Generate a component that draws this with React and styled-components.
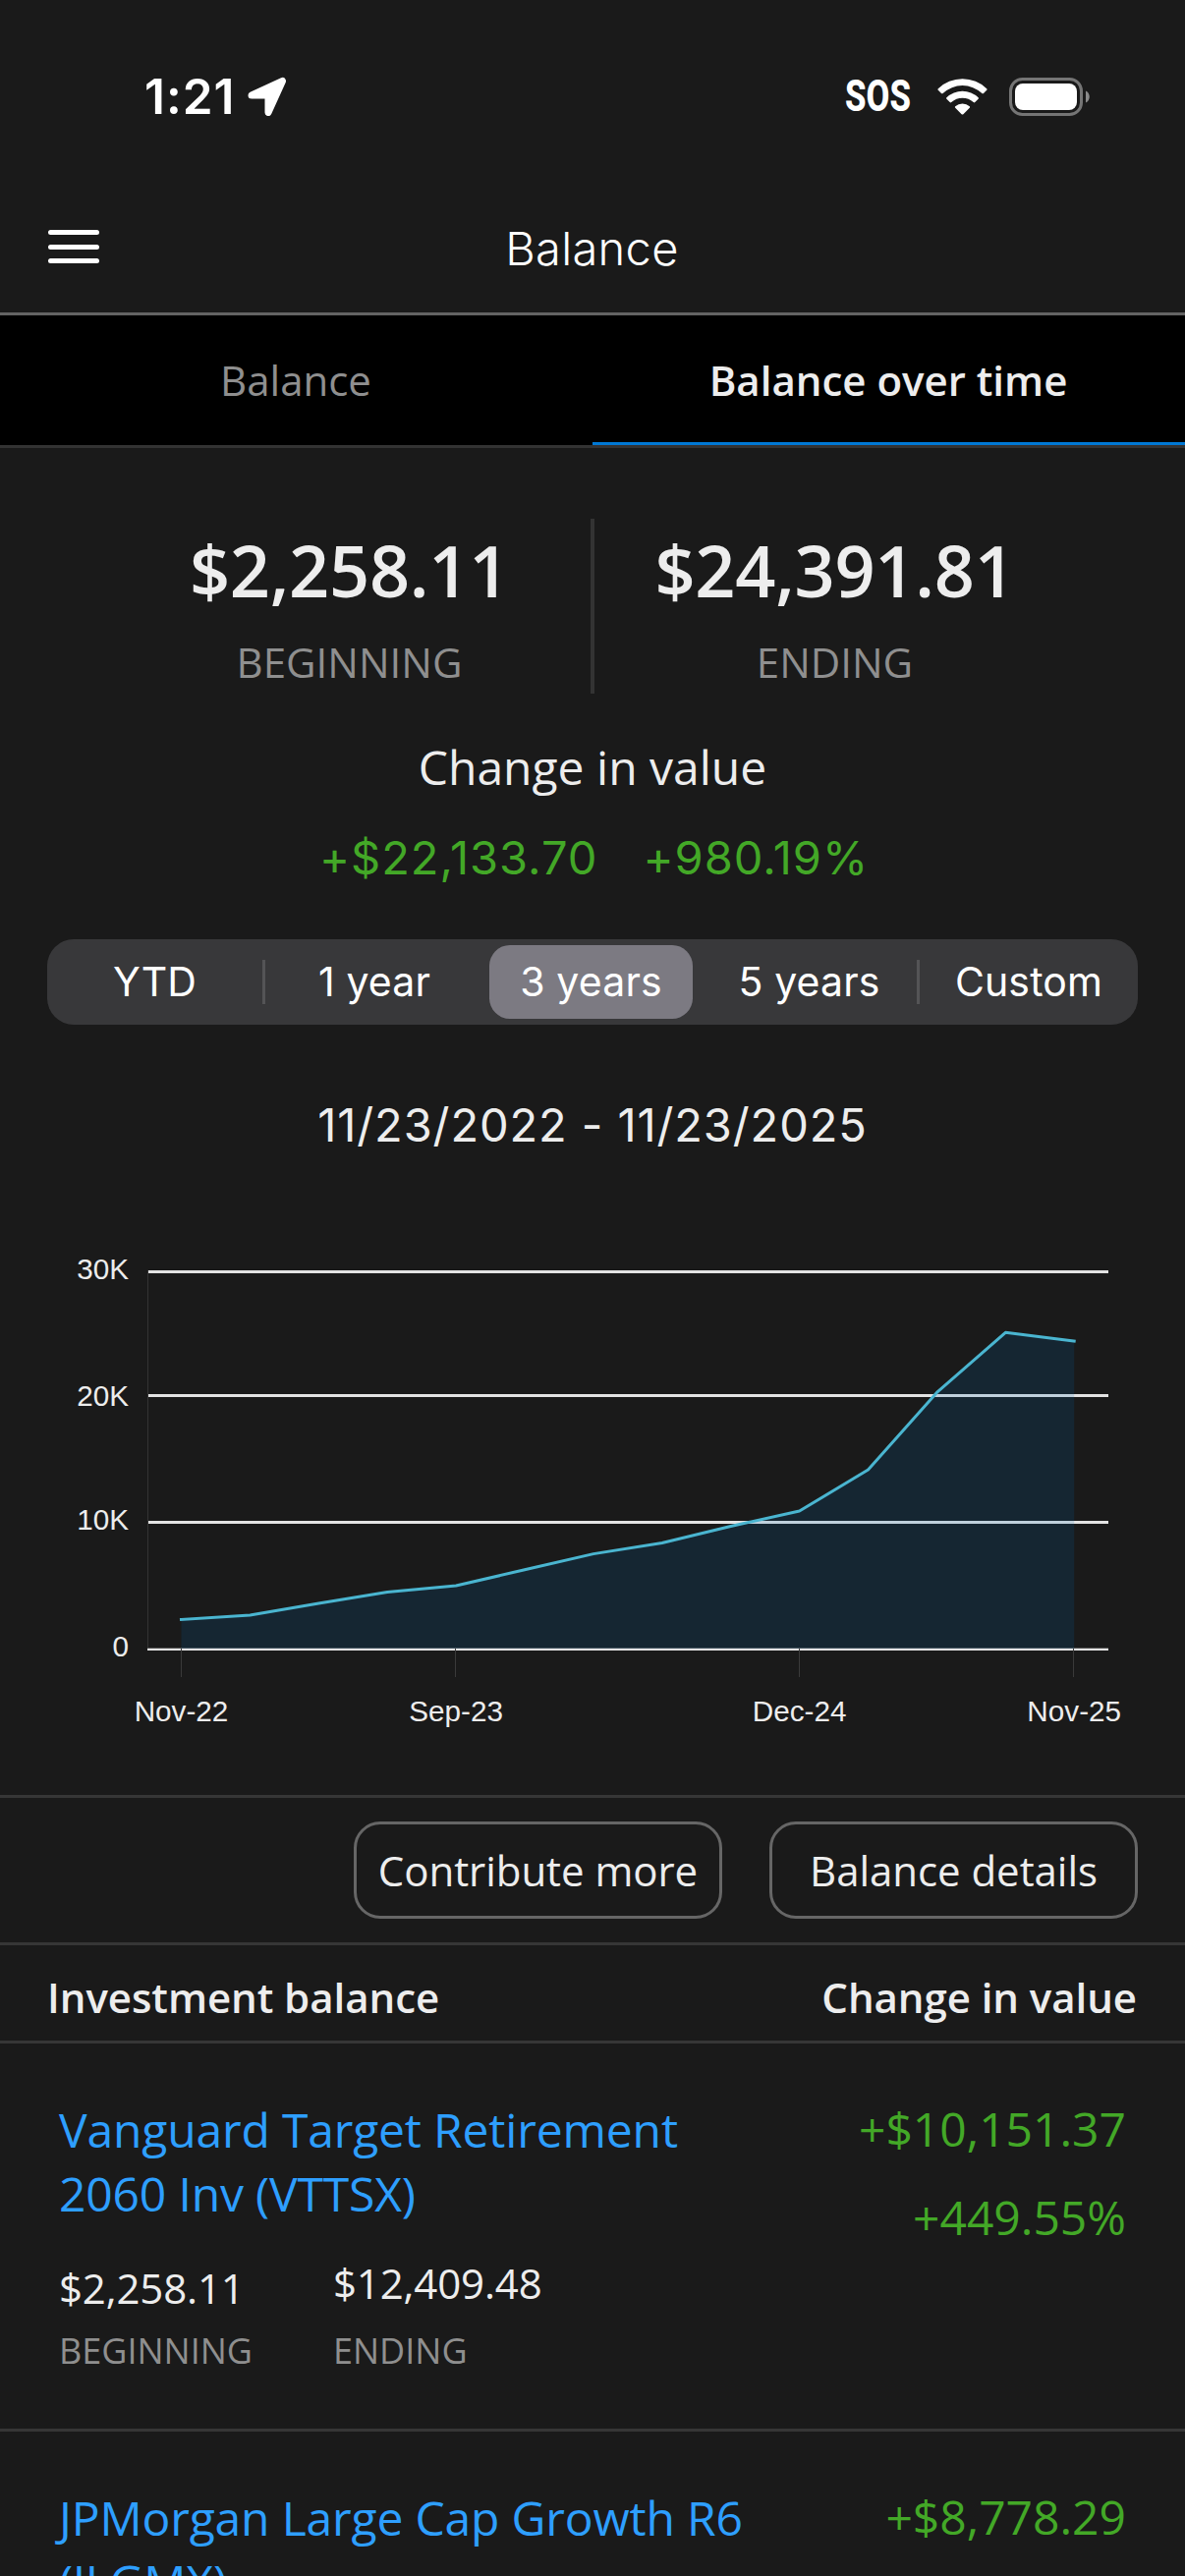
import React from 'react';
import styled, { createGlobalStyle } from 'styled-components';

const GlobalStyle = createGlobalStyle`
    * {
        box-sizing: border-box;
    }

    body {
        margin: 0;
        background: #1a1a1a;
    }
`

const Screen = styled.div`
    width: 1206px;
    height: 2622px;
    overflow: hidden;
    display: flex;
    flex-direction: column;
    background: #1a1a1a;
    color: #ededed;
    font-family: 'Open Sans', sans-serif;
    white-space: nowrap;
`

const StatusBar = styled.div`
    height: 196px;
    flex-shrink: 0;
    display: flex;
    align-items: center;
    justify-content: space-between;
    padding: 0 96px 0 147px;
    color: #fff;
`

const StatusGroup = styled.div`
    display: flex;
    align-items: center;
`

const Time = styled.span`
    font: 600 49.5px/60px Inter, sans-serif;
    letter-spacing: 1px;
    width: 105px;
`

const Sos = styled.span`
    font: 800 45px/60px Roboto, sans-serif;
    width: 68px;
    margin-right: 26px;
    transform: scaleX(0.77);
    transform-origin: left center;
`

const WifiIcon = styled.svg`
    width: 51px;
    height: 37px;
    margin-right: 22px;
`

const BatteryIcon = styled.svg`
    width: 83px;
    height: 39px;
`

const NavBar = styled.header`
    height: 125px;
    flex-shrink: 0;
    display: grid;
    grid-template-columns: 1fr auto 1fr;
    align-items: center;
    padding: 0 49px 10px 48px;
    border-bottom: 3px solid #636363;
`

const MenuButton = styled.button`
    width: 54px;
    padding: 0;
    border: 0;
    background: none;
    display: flex;
    flex-direction: column;
    gap: 9.5px;
    margin: -2px 0 0 1px;
`

const MenuLine = styled.span`
    width: 52px;
    height: 5px;
    border-radius: 2.5px;
    background: #fff;
`

const Title = styled.h1`
    margin: 0;
    color: #fff;
    font: 300 47px/57px Inter, sans-serif;
    letter-spacing: 0.3px;
`

const Tabs = styled.nav`
    height: 135px;
    flex-shrink: 0;
    display: grid;
    grid-template-columns: 1fr 1fr;
    background: #000;
    border-bottom: 3px solid #333;
`

const Tab = styled.div`
    display: flex;
    align-items: center;
    justify-content: center;
    padding: 2px 1px 0 0;
    font-size: 42px;
    font-weight: ${props => props.$active ? 600 : 400};
    color: ${props => props.$active ? '#ededed' : '#8f8f8f'};
    border-bottom: 3px solid ${props => props.$active ? '#0078d4' : '#000'};
`

const Summary = styled.section`
    height: 178px;
    flex-shrink: 0;
    margin-top: 72px;
    display: flex;
    justify-content: center;
`

const SummaryColumn = styled.div`
    width: 490px;
    padding: 3px 1px 0 0;
    text-align: center;
`

const SummaryDivider = styled.div`
    width: 4px;
    background: #333;
`

const SummaryAmount = styled.div`
    font-size: 72px;
    font-weight: 600;
    line-height: 98px;
    letter-spacing: -0.25px;
`

const SummaryLabel = styled.div`
    margin-top: 16px;
    font-size: 42px;
    line-height: 57px;
    color: #8f8f8f;
`

const ChangeTitle = styled.h2`
    margin: 42px 0 0;
    text-align: center;
    font-size: 48px;
    font-weight: 400;
    line-height: 65px;
`

const ChangeValues = styled.div`
    display: flex;
    justify-content: center;
    gap: 46px;
    margin-top: 31px;
    padding-left: 3px;
    color: #43a827;
    font: 400 47px/57px Inter, sans-serif;
    letter-spacing: 1px;
`

const Segments = styled.div`
    height: 87px;
    flex-shrink: 0;
    margin: 55px 48px 0;
    display: grid;
    grid-template-columns: repeat(5, 1fr);
    align-items: center;
    border-radius: 27px;
    background: #38383a;
`

const Segment = styled.div`
    height: ${props => props.$active ? '75px' : '45px'};
    margin: ${props => props.$active ? '0 9px 0 6px' : '0'};
    padding-bottom: 1px;
    display: flex;
    align-items: center;
    justify-content: center;
    border-radius: ${props => props.$active ? '21px' : '0'};
    border-right: ${props => props.$divider ? '3px solid #545456' : '0'};
    background: ${props => props.$active ? '#7c7a82' : 'none'};
    color: #fff;
    font: 400 41px/50px Inter, sans-serif;
    letter-spacing: 0.15px;
`

const DateRange = styled.div`
    margin-top: 73px;
    text-align: center;
    font: 400 47px/57px Inter, sans-serif;
    letter-spacing: 0.9px;
`

const ChartSvg = styled.svg`
    display: block;
    flex-shrink: 0;
    width: 1206px;
    height: 654px;
`

const ChartLabel = styled.text`
    fill: #ededed;
    font-family: 'Liberation Sans', Arial, sans-serif;
    font-size: 29.7px;
`

const Actions = styled.div`
    height: 153px;
    flex-shrink: 0;
    display: flex;
    justify-content: flex-end;
    gap: 48px;
    padding: 24px 48px;
    border-top: 3px solid #363636;
    border-bottom: 3px solid #363636;
`

const ActionButton = styled.button`
    width: 375px;
    height: 99px;
    padding: 0;
    border: 3px solid #666;
    border-radius: 27px;
    background: none;
    color: #ededed;
    font: 400 42px/57px 'Open Sans', sans-serif;
    letter-spacing: -0.05px;
`

const ListHeader = styled.div`
    height: 100px;
    flex-shrink: 0;
    display: flex;
    align-items: center;
    justify-content: space-between;
    padding: 8px 49px 0 48px;
    border-bottom: 3px solid #363636;
    font-size: 42px;
    font-weight: 600;
    letter-spacing: -0.05px;
`

const FundRow = styled.article`
    height: 395px;
    flex-shrink: 0;
    display: flex;
    justify-content: space-between;
    padding: 55px 60px 0;
    border-bottom: 3px solid #363636;
`

const FundInfo = styled.div`
    width: 720px;
`

const FundName = styled.a`
    display: block;
    font-size: 48px;
    line-height: 65px;
    letter-spacing: -0.16px;
    color: #2e9fff;
    white-space: normal;
`

const FundValues = styled.div`
    display: flex;
    align-items: flex-end;
    margin-top: 30px;
`

const FundValue = styled.div`
    width: 279px;
    font-size: 42px;
    line-height: 57px;
    letter-spacing: -0.15px;
`

const FundLabel = styled.div`
    margin-top: ${props => props.$gap}px;
    font-size: 36px;
    line-height: 49px;
    letter-spacing: 0;
    color: #8f8f8f;
`

const FundChange = styled.div`
    display: flex;
    flex-direction: column;
    align-items: flex-end;
    gap: 25px;
    margin-top: -1px;
    font-size: 48px;
    line-height: 65px;
    color: #43a827;
`

const ranges = ['YTD', '1 year', '3 years', '5 years', 'Custom'];

const history = [
    2340, 2680, 3620, 4510, 5020, 6280, 7540,
    8400, 9730, 10930, 14200, 20320, 25070, 24392,
];

const gridLines = [
    { label: '30K', y: 121.5, textY: 129 },
    { label: '20K', y: 247.5, textY: 258 },
    { label: '10K', y: 376.5, textY: 384 },
];

const ticks = [
    { label: 'Nov-22', index: 0 },
    { label: 'Sep-23', index: 4 },
    { label: 'Dec-24', index: 9 },
    { label: 'Nov-25', index: 13 },
];

const funds = [
    {
        name: 'Vanguard Target Retirement 2060 Inv (VTTSX)',
        beginning: '$2,258.11',
        ending: '$12,409.48',
        change: '+$10,151.37',
        percent: '+449.55%',
    },
    {
        name: 'JPMorgan Large Cap Growth R6 (JLGMX)',
        change: '+$8,778.29',
    },
];

const getX = (index) => 184.5 + index * 69.9;
const getY = (value) => 505.5 - value * 0.01285;

const LocationArrow = () => (
    <svg width="40" height="40" viewBox="0 0 40 40">
        <path
            d="M35.5 4.5 L21 36.5 V19 H4 Z"
            fill="#fff"
            stroke="#fff"
            strokeWidth="7"
            strokeLinejoin="round"
        />
    </svg>
);

const Wifi = () => (
    <WifiIcon viewBox="0 0 51 37" fill="#fff">
        <path d="M0.8 10.2 A35.5 35.5 0 0 1 50.2 10.2 Q51 11 50.2 11.8 L47 15 Q46.2 15.7 45.4 15 A29 29 0 0 0 5.6 15 Q4.8 15.7 4 15 L0.8 11.8 Q0 11 0.8 10.2 Z" />
        <path d="M9.4 19.2 A23.3 23.3 0 0 1 41.6 19.2 Q42.4 20 41.6 20.8 L38.3 24.1 Q37.5 24.8 36.7 24.1 A16.6 16.6 0 0 0 14.3 24.1 Q13.5 24.8 12.7 24.1 L9.4 20.8 Q8.6 20 9.4 19.2 Z" />
        <path d="M18.2 28.2 A11 11 0 0 1 32.8 28.2 Q33.6 29 32.8 29.8 L26.4 36.2 Q25.5 37 24.6 36.2 L18.2 29.8 Q17.4 29 18.2 28.2 Z" />
    </WifiIcon>
);

const Battery = () => (
    <BatteryIcon viewBox="0 0 83 39">
        <rect x="1.5" y="1.5" width="72" height="36" rx="12" fill="none" stroke="#757575" strokeWidth="3" />
        <rect x="6" y="6" width="63" height="27" rx="8" fill="#fff" />
        <path d="M78 13.5 C83 15.5 83 23.5 78 25.5 Z" fill="#8a8a8a" />
    </BatteryIcon>
);

const BalanceChart = () => {
    const points = history.map((value, i) => `${getX(i)},${getY(value)}`).join(' ');
    const area = `${getX(0)},505 ${points} ${getX(13)},505`;

    return (
        <ChartSvg viewBox="0 0 1206 654">
            {gridLines.map(line => (
                <g key={line.label}>
                    <path d={`M151 ${line.y} H1128`} stroke="#e3e3e3" strokeWidth="3" />
                    <ChartLabel x="131" y={line.textY} textAnchor="end">{line.label}</ChartLabel>
                </g>
            ))}
            <ChartLabel x="131" y="512.5" textAnchor="end">0</ChartLabel>
            <path d="M150.5 120 V507" stroke="#333" strokeWidth="1" />
            <path d="M150 506 H1128" stroke="#e3e3e3" strokeWidth="2" />
            <path d="M150 504.5 H1128" stroke="#555" strokeWidth="1" />
            <polygon points={area} fill="rgba(0, 110, 187, 0.155)" />
            <polyline points={points} fill="none" stroke="#4ab5d0" strokeWidth="3" strokeLinejoin="round" strokeLinecap="square" />
            {ticks.map(tick => (
                <g key={tick.label}>
                    <path d={`M${Math.round(getX(tick.index)) - 0.5} 505 V534`} stroke="#3a3a3a" strokeWidth="1" />
                    <ChartLabel x={getX(tick.index)} y="579" textAnchor="middle">{tick.label}</ChartLabel>
                </g>
            ))}
        </ChartSvg>
    );
}

const Fund = ({ fund }) => (
    <FundRow>
        <FundInfo>
            <FundName>{fund.name}</FundName>
            {fund.beginning && (
                <FundValues>
                    <FundValue>
                        {fund.beginning}
                        <FundLabel $gap={11}>BEGINNING</FundLabel>
                    </FundValue>
                    <FundValue>
                        {fund.ending}
                        <FundLabel $gap={16}>ENDING</FundLabel>
                    </FundValue>
                </FundValues>
            )}
        </FundInfo>
        <FundChange>
            <span>{fund.change}</span>
            {fund.percent && <span>{fund.percent}</span>}
        </FundChange>
    </FundRow>
);

const App = () => {
    return (
        <Screen>
            <GlobalStyle />
            <StatusBar>
                <StatusGroup>
                    <Time>1:21</Time>
                    <LocationArrow />
                </StatusGroup>
                <StatusGroup>
                    <Sos>SOS</Sos>
                    <Wifi />
                    <Battery />
                </StatusGroup>
            </StatusBar>
            <NavBar>
                <MenuButton aria-label="Menu">
                    <MenuLine />
                    <MenuLine />
                    <MenuLine />
                </MenuButton>
                <Title>Balance</Title>
            </NavBar>
            <Tabs>
                <Tab>Balance</Tab>
                <Tab $active>Balance over time</Tab>
            </Tabs>
            <Summary>
                <SummaryColumn>
                    <SummaryAmount>$2,258.11</SummaryAmount>
                    <SummaryLabel>BEGINNING</SummaryLabel>
                </SummaryColumn>
                <SummaryDivider />
                <SummaryColumn>
                    <SummaryAmount>$24,391.81</SummaryAmount>
                    <SummaryLabel>ENDING</SummaryLabel>
                </SummaryColumn>
            </Summary>
            <ChangeTitle>Change in value</ChangeTitle>
            <ChangeValues>
                <span>+$22,133.70</span>
                <span>+980.19%</span>
            </ChangeValues>
            <Segments>
                {ranges.map((range, i) => (
                    <Segment key={range} $active={range === '3 years'} $divider={i === 0 || i === 3}>
                        {range}
                    </Segment>
                ))}
            </Segments>
            <DateRange>11/23/2022 - 11/23/2025</DateRange>
            <BalanceChart />
            <Actions>
                <ActionButton>Contribute more</ActionButton>
                <ActionButton>Balance details</ActionButton>
            </Actions>
            <ListHeader>
                <span>Investment balance</span>
                <span>Change in value</span>
            </ListHeader>
            {funds.map(fund => <Fund key={fund.name} fund={fund} />)}
        </Screen>
    );
}

export default App;
